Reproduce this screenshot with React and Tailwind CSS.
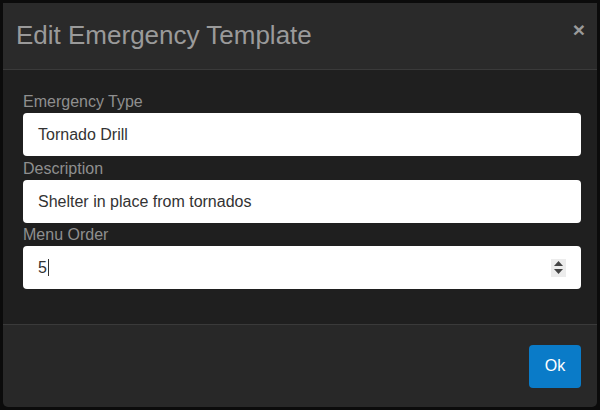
export default function App() {
  const fields = [
    { label: 'Emergency Type', value: 'Tornado Drill' },
    { label: 'Description', value: 'Shelter in place from tornados' },
  ]

  return (
    <div className="w-[600px] h-[410px] bg-[#0b0b0b] p-[3px] font-['Liberation_Sans',Arial,sans-serif]">
      <div className="h-[404px] flex flex-col rounded-b-[5px] overflow-hidden">
        {/* header */}
        <div className="h-[67px] shrink-0 bg-[#2a2a2a] border-b border-[#3a3a3a] flex items-center justify-between pl-[13px] pr-[12px]">
          <h4 className="text-[26px] text-[#9a9a9a] leading-none pb-[2px]">Edit Emergency Template</h4>
          <span className="text-[#9a9a9a] text-[21px] font-bold leading-none -mt-[14px]">×</span>
        </div>

        {/* body */}
        <div className="flex-1 bg-[#1f1f1f] pl-[20px] pr-[16px] pt-[22px]">
          {fields.map((f) => (
            <div key={f.label}>
              <label className="block text-[16px] leading-[20px] text-[#8f8f8f]">{f.label}</label>
              <div className="mt-[1px] mb-[3px] h-[43px] bg-white rounded-[4px] flex items-center px-[15px] text-[16px] text-[#333]">
                {f.value}
              </div>
            </div>
          ))}
          <label className="block text-[16px] leading-[20px] text-[#8f8f8f] -mt-[1px]">Menu Order</label>
          <div className="mt-[1px] h-[43px] bg-white rounded-[4px] flex items-center pl-[15px] pr-[15px] text-[16px] text-[#333]">
            <span>5</span>
            <span className="w-px h-[17px] bg-[#333] ml-[1px]" />
            <div className="ml-auto w-[15px] h-[18px] bg-[#ececec] flex flex-col items-center justify-center gap-[3px]">
              <svg width="9" height="5" viewBox="0 0 9 5"><path d="M0 5 L4.5 0 L9 5 Z" fill="#444" /></svg>
              <svg width="9" height="5" viewBox="0 0 9 5"><path d="M0 0 L4.5 5 L9 0 Z" fill="#444" /></svg>
            </div>
          </div>
        </div>

        {/* footer */}
        <div className="h-[83px] shrink-0 bg-[#282828] border-t border-[#3a3a3a] flex items-center justify-end pr-[16px]">
          <button className="w-[52px] h-[43px] rounded-[4px] bg-[#0a7bc8] text-white text-[16px]">Ok</button>
        </div>
      </div>
    </div>
  )
}
